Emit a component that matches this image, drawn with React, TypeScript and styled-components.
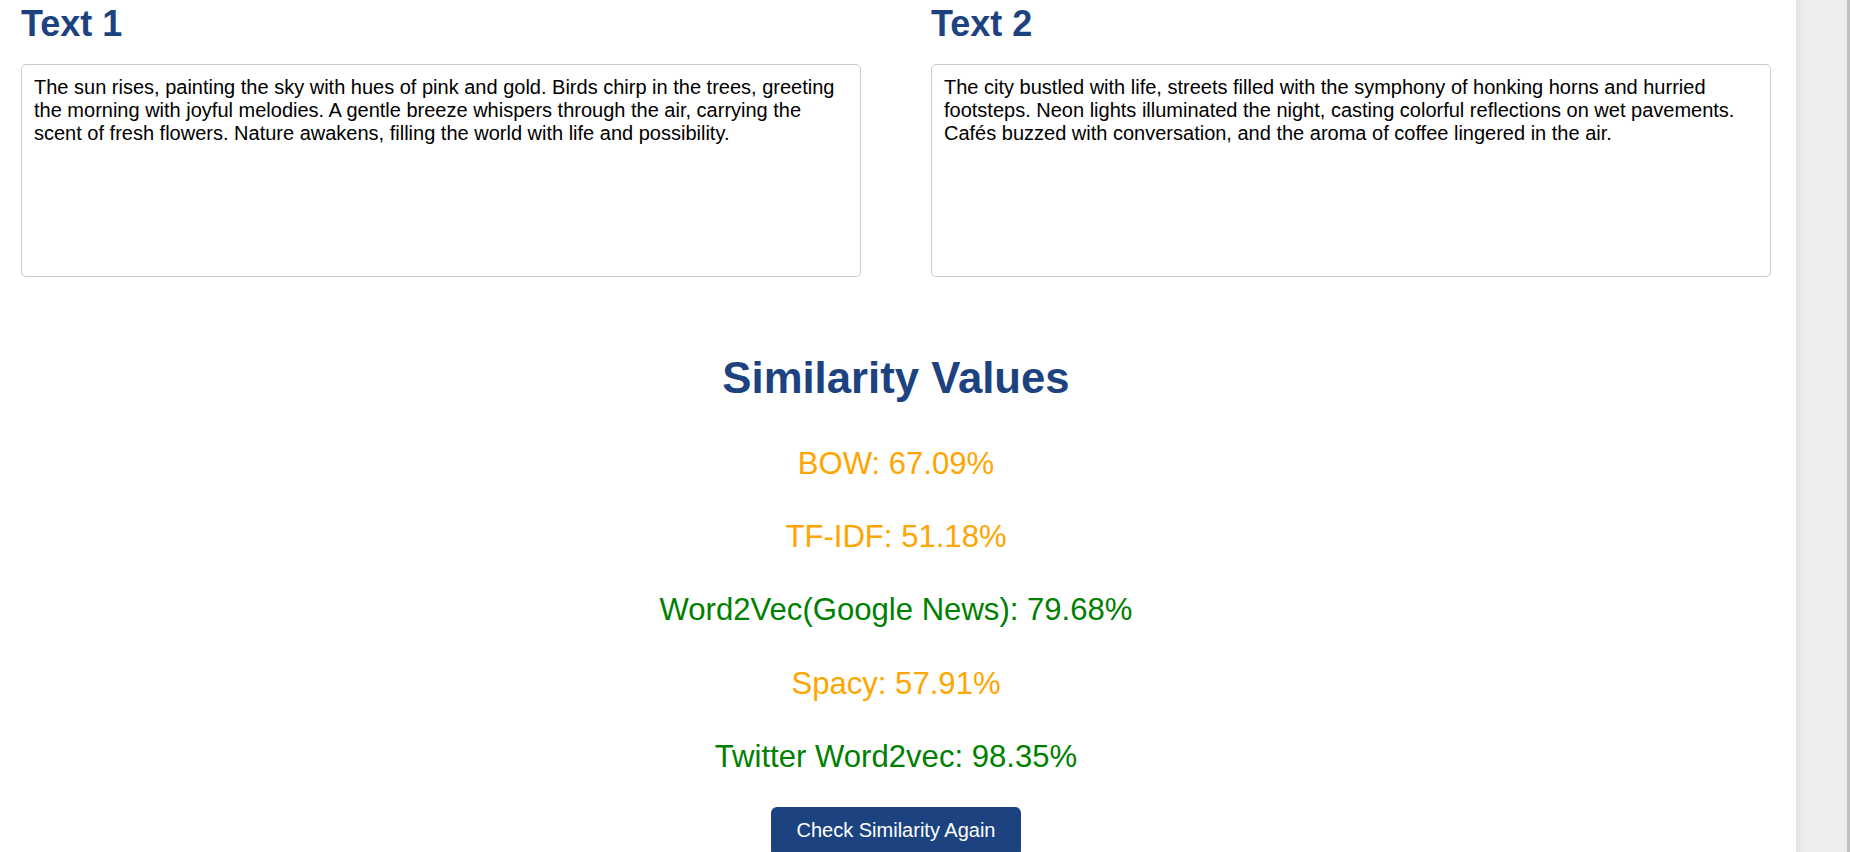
import React from "react";
import styled, { createGlobalStyle } from "styled-components";

const GlobalStyle = createGlobalStyle`
  html, body {
    margin: 0;
    padding: 0;
    background: #ffffff;
    font-family: "Liberation Sans", Arial, sans-serif;
    overflow: hidden;
  }
  * { box-sizing: border-box; }
`;

const Page = styled.div`
  display: flex;
  width: 1850px;
  height: 852px;
  overflow: hidden;
`;

const Main = styled.main`
  flex: 1;
  display: flex;
  flex-direction: column;
  padding: 0 25px 0 21px;
  min-width: 0;
`;

const SideStrip = styled.aside`
  width: 54px;
  flex: none;
  background: linear-gradient(to right, #e4e4e4 0px, #eeeeee 10px, #eeeeee 100%);
  border-right: 3px solid #bfbfbf;
`;

const EditorRow = styled.section`
  display: grid;
  grid-template-columns: 840px 840px;
  column-gap: 70px;
`;

const EditorColumn = styled.div`
  display: flex;
  flex-direction: column;
`;

const TextHeading = styled.h2`
  margin: 0 0 20px;
  padding-top: 3px;
  font-family: "Liberation Sans", Arial, sans-serif;
  font-weight: 700;
  font-size: 36px;
  line-height: 41px;
  color: #1c4380;
`;

const TextBox = styled.textarea`
  width: 840px;
  height: 213px;
  margin: 0;
  padding: 11px 12px;
  border: 1px solid #cccccc;
  border-radius: 5px;
  resize: none;
  outline: none;
  font-family: "Liberation Sans", Arial, sans-serif;
  font-size: 20px;
  line-height: 23px;
  color: #000000;
  background: #ffffff;
  overflow: hidden;
`;

const Results = styled.section`
  display: flex;
  flex-direction: column;
  align-items: center;
  padding-top: 76px;
`;

const ResultsTitle = styled.h1`
  margin: 0 0 44px;
  font-family: "Liberation Sans", Arial, sans-serif;
  font-weight: 700;
  font-size: 43.7px;
  line-height: 49px;
  color: #1c4380;
`;

const MetricList = styled.div`
  display: flex;
  flex-direction: column;
  align-items: center;
  gap: 38.2px;
`;

const Metric = styled.p<{ $tone: "good" | "fair" }>`
  margin: 0;
  font-family: "Liberation Sans", Arial, sans-serif;
  font-size: 31.1px;
  line-height: 35px;
  color: ${(p) => (p.$tone === "good" ? "#008000" : "#ffa500")};
`;

const AgainButton = styled.button`
  margin-top: 33px;
  padding: 12px 26px 14px;
  border: none;
  border-radius: 6px;
  background: #1c4380;
  color: #ffffff;
  font-family: "Liberation Sans", Arial, sans-serif;
  font-size: 20px;
  line-height: 23px;
  cursor: pointer;
`;

const text1 =
  "The sun rises, painting the sky with hues of pink and gold. Birds chirp in the trees, greeting the morning with joyful melodies. A gentle breeze whispers through the air, carrying the scent of fresh flowers. Nature awakens, filling the world with life and possibility.";
const text2 =
  "The city bustled with life, streets filled with the symphony of honking horns and hurried footsteps. Neon lights illuminated the night, casting colorful reflections on wet pavements. Cafés buzzed with conversation, and the aroma of coffee lingered in the air.";

const metrics: { label: string; value: number }[] = [
  { label: "BOW", value: 67.09 },
  { label: "TF-IDF", value: 51.18 },
  { label: "Word2Vec(Google News)", value: 79.68 },
  { label: "Spacy", value: 57.91 },
  { label: "Twitter Word2vec", value: 98.35 },
];

export default function App() {
  return (
    <>
      <GlobalStyle />
      <Page>
        <Main>
          <EditorRow>
            <EditorColumn>
              <TextHeading>Text 1</TextHeading>
              <TextBox defaultValue={text1} spellCheck={false} />
            </EditorColumn>
            <EditorColumn>
              <TextHeading>Text 2</TextHeading>
              <TextBox defaultValue={text2} spellCheck={false} />
            </EditorColumn>
          </EditorRow>
          <Results>
            <ResultsTitle>Similarity Values</ResultsTitle>
            <MetricList>
              {metrics.map((m) => (
                <Metric key={m.label} $tone={m.value >= 70 ? "good" : "fair"}>
                  {m.label}: {m.value.toFixed(2)}%
                </Metric>
              ))}
            </MetricList>
            <AgainButton type="button">Check Similarity Again</AgainButton>
          </Results>
        </Main>
        <SideStrip />
      </Page>
    </>
  );
}
